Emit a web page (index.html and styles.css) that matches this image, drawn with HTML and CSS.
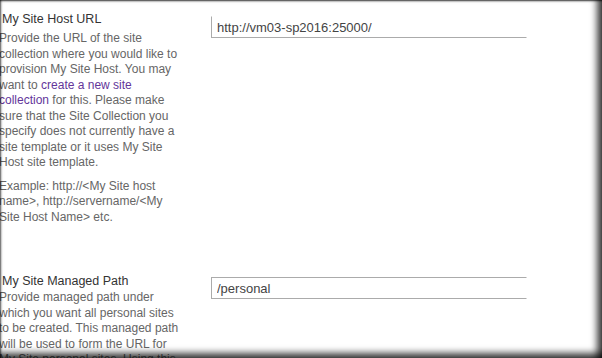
FILE: index.html
```html
<!DOCTYPE html>
<html>
<head>
<meta charset="utf-8">
<link rel="stylesheet" href="styles.css">
</head>
<body>
<div class="frame">
  <div class="section section-first">
    <div class="info">
      <h3 class="title">My Site Host URL</h3>
      <p class="desc">Provide the URL of the site collection where you would like to provision My Site Host. You may want to <a class="link" href="#">create a new site collection</a> for this. Please make sure that the Site Collection you specify does not currently have a site template or it uses My Site Host site template.</p>
      <p class="desc">Example: http://&lt;My Site host name&gt;, http://servername/&lt;My Site Host Name&gt; etc.</p>
    </div>
    <div class="field">
      <input class="textbox textbox-open" type="text" value="http://vm03-sp2016:25000/">
    </div>
  </div>
  <div class="section section-second">
    <div class="info">
      <h3 class="title">My Site Managed Path</h3>
      <p class="desc">Provide managed path under which you want all personal sites to be created. This managed path will be used to form the URL for My Site personal sites. Using this path, users will be able to access their personal sites.</p>
    </div>
    <div class="field">
      <input class="textbox" type="text" value="/personal">
    </div>
  </div>
</div>
</body>
</html>
```

FILE: styles.css
```css
html, body {
  margin: 0;
  padding: 0;
  background: #fff;
}

.frame {
  position: relative;
  width: 602px;
  height: 358px;
  overflow: hidden;
  background: #fff;
  font-family: "Liberation Sans", Arial, sans-serif;
}

.frame::after {
  content: "";
  position: absolute;
  inset: 0;
  pointer-events: none;
  box-shadow:
    inset 0 2px 2px -1px rgba(0,0,0,0.75),
    inset 2px 0 2px -1px rgba(0,0,0,0.6),
    inset -9px 0 7px -4px rgba(0,0,0,0.75),
    inset 0 -9px 7px -4px rgba(0,0,0,0.75);
}

.section {
  display: grid;
  grid-template-columns: 181px 316px;
  column-gap: 31px;
  margin-left: -1px;
}

.section-first {
  padding-top: 10px;
}

.section-second {
  padding-top: 47px;
}

.title {
  margin: 0 0 0 3px;
  font-size: 12.5px;
  line-height: 18px;
  font-weight: 400;
  color: #333;
}

.section-first .title {
  margin-bottom: 3px;
}

.desc {
  margin: 0 0 8px 0;
  font-size: 12px;
  line-height: 15.5px;
  color: #666;
}

.desc:last-child {
  margin-bottom: 0;
}

.link {
  color: #63359a;
  text-decoration: none;
}

.field {
  padding-top: 6px;
}

.section-second .field {
  padding-top: 5px;
}

.textbox {
  box-sizing: border-box;
  display: block;
  width: 316px;
  height: 22px;
  margin: 0;
  padding: 0 5px;
  border: 1px solid #ababab;
  border-right-color: #fff;
  font-family: "Liberation Sans", Arial, sans-serif;
  font-size: 13px;
  color: #444;
  background: #fff;
  outline: none;
}

.textbox-open {
  border-top-color: #fff;
}
```
